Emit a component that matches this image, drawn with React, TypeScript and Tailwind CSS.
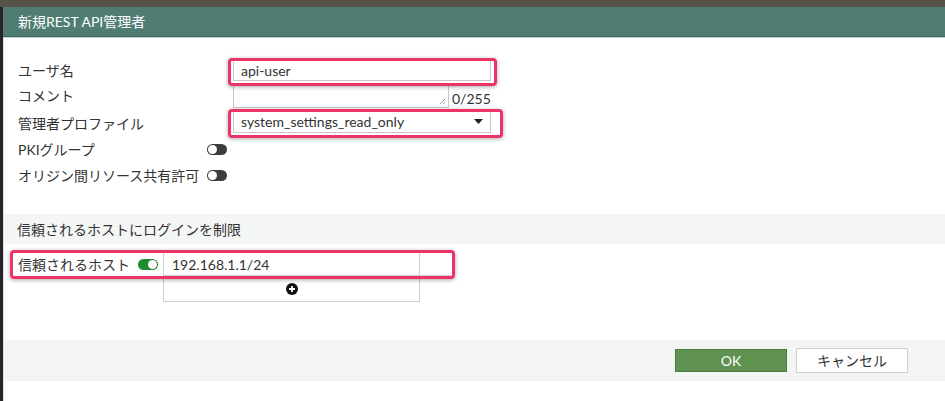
import React from 'react';

const FONT = "font-['Lato','Noto_Sans_CJK_JP',sans-serif]";

const Toggle: React.FC<{ on?: boolean }> = ({ on }) => (
  <span
    className={`relative inline-flex h-[11px] w-[20px] shrink-0 items-center rounded-full ${
      on ? 'bg-[#1f8a2e] justify-end' : 'bg-[#3c3c3c] justify-start'
    }`}
  >
    <span
      className={`h-[9px] w-[9px] rounded-full bg-white ${on ? 'mr-[1px]' : 'ml-[1px]'}`}
    />
  </span>
);

// pink annotation frame drawn over a form row
const Highlight: React.FC<{ className: string }> = ({ className }) => (
  <div
    className={`pointer-events-none absolute rounded-[4px] border-[3px] border-[#ec3468] shadow-[0_1px_4px_rgba(0,0,0,0.35)] ${className}`}
  />
);

const App: React.FC = () => {
  return (
    <div className={`flex h-[401px] w-[945px] flex-col overflow-hidden bg-[#2a2328] text-[14px] text-[#333] ${FONT}`}>
      <div className="h-[7px] shrink-0 bg-[#58534a]" />
      <div className="flex flex-1">
        <div className="w-[3px] shrink-0 bg-[#2a2328]" />
        <div className="relative flex flex-1 flex-col bg-white">
          {/* Title bar */}
          <div className="flex h-[29px] shrink-0 items-center bg-[#4f7d74] pl-[15px] text-white">
            新規REST API管理者
          </div>
          <div className="h-[1px] bg-[#3c685f]" />
          <div className="h-[1px] bg-[#c7d3d0]" />

          <div className="flex flex-1 flex-col border-l border-[#dcdcdc]">
            {/* Form */}
            <div className="flex flex-col pl-[14px] pt-[21px]">
              <div className="flex h-[23px] items-center">
                <span className="w-[215px]">ユーザ名</span>
                <div className="flex h-[21px] w-[258px] items-center border border-[#c8c8c8] pl-[7px]">
                  api-user
                </div>
              </div>
              <div className="flex h-[26px] items-center">
                <span className="w-[215px]">コメント</span>
                <div className="relative h-[25px] w-[216px] border-x border-b border-[#c8c8c8]">
                  <svg className="absolute bottom-[2px] right-[2px]" width="7" height="7" viewBox="0 0 7 7">
                    <path d="M6 1L1 6M6 4L4 6" stroke="#999" strokeWidth="1" />
                  </svg>
                </div>
                <span className="ml-[3px] self-end text-[14px] leading-[18px]">0/255</span>
              </div>
              <div className="mt-[2px] flex h-[23px] items-center">
                <span className="w-[215px] pt-[3px]">管理者プロファイル</span>
                <div className="flex h-[23px] w-[258px] items-center justify-between border border-[#c8c8c8] pl-[7px] pr-[7px]">
                  <span>system_settings_read_only</span>
                  <svg width="9" height="5" viewBox="0 0 9 5">
                    <path d="M0 0H9L4.5 5Z" fill="#222" />
                  </svg>
                </div>
              </div>
              <div className="flex h-[29px] items-center pt-[3px]">
                <span className="w-[189px]">PKIグループ</span>
                <Toggle />
              </div>
              <div className="flex h-[27px] items-center">
                <span className="w-[189px] whitespace-nowrap">オリジン間リソース共有許可</span>
                <Toggle />
              </div>
            </div>

            {/* Section band */}
            <div className="mt-[25px] flex h-[30px] items-center bg-[#f4f5f5] pl-[13px]">
              信頼されるホストにログインを制限
            </div>

            {/* Trusted hosts */}
            <div className="mt-[8px] flex flex-col pl-[14px]">
              <div className="flex h-[24px] items-center">
                <div className="flex w-[140px] shrink-0 items-center justify-between">
                  <span className="whitespace-nowrap">信頼されるホスト</span>
                  <Toggle on />
                </div>
                <div className="ml-[5px] flex h-[24px] w-[257px] items-center border border-[#cfcfcf] pl-[8px]">
                  192.168.1.1/24
                </div>
                <div className="h-[24px] w-[31px] border-y border-[#cfcfcf]" />
              </div>
              <div className="ml-[145px] flex h-[26px] w-[257px] items-center justify-center border-x border-b border-[#cfcfcf]">
                <svg width="12" height="12" viewBox="0 0 12 12">
                  <circle cx="6" cy="6" r="6" fill="#111" />
                  <path d="M6 3V9M3 6H9" stroke="#fff" strokeWidth="1.8" />
                </svg>
              </div>
            </div>

            {/* Footer */}
            <div className="mt-[38px] flex h-[41px] items-center justify-end bg-[#f3f4f4] pr-[37px]">
              <button className="flex h-[23px] w-[112px] items-center justify-center border border-[#4d7d40] bg-[#5f9150] text-white">
                OK
              </button>
              <button className="ml-[9px] flex h-[25px] w-[112px] items-center justify-center border border-[#cfcfcf] bg-white text-[#333]">
                キャンセル
              </button>
            </div>
          </div>

          <Highlight className="left-[225px] top-[51px] h-[28px] w-[269px]" />
          <Highlight className="left-[225px] top-[102px] h-[29px] w-[275px]" />
          <Highlight className="left-[7px] top-[243px] h-[29px] w-[445px]" />
        </div>
      </div>
    </div>
  );
};

export default App;
